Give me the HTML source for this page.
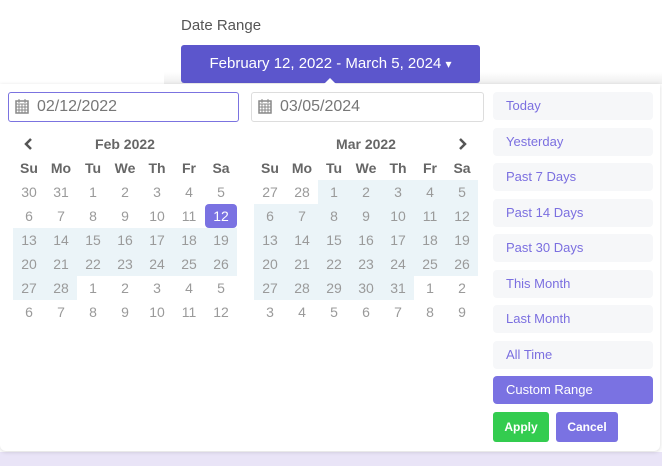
<!DOCTYPE html><html><head><style>
*{margin:0;padding:0;box-sizing:border-box}
body{width:662px;height:466px;position:relative;background:#fff;font-family:"Liberation Sans",sans-serif;overflow:hidden}
.a{position:absolute}
.t{position:absolute;font-size:14px;color:#9a9a9a;text-align:center;width:32px;line-height:24px}
.h{color:#666;font-weight:bold}
.hl{position:absolute;background:#ebf4f8}
.r{position:absolute;left:493px;width:160px;height:28px;background:#f6f7f9;border-radius:4px;color:#7b6fe0;font-size:13px;line-height:28px;padding-left:13px}
</style></head><body>
<div class="a" style="left:0;top:452px;width:662px;height:14px;background:#e9e4f7"></div>
<div class="a" style="left:164px;top:72px;width:498px;height:12px;background:linear-gradient(#fff,#eee)"></div>
<div class="a" style="left:181px;top:17px;font-size:15px;color:#555">Date Range</div>
<div class="a" style="left:181px;top:45px;width:299px;height:38px;background:#5c56cc;border-radius:3px;color:#fff;font-size:15px;line-height:38px;text-align:center">February 12, 2022 - March 5, 2024 <span style="font-size:12px">▾</span></div>
<div class="a" style="left:0;top:84px;width:660px;height:367px;background:#fff;border-radius:0 0 6px 6px;box-shadow:0 1px 4px rgba(0,0,0,.15)"></div>
<div class="a" style="left:324px;top:78px;width:0;height:0;border-left:6px solid transparent;border-right:6px solid transparent;border-bottom:6px solid #fff"></div>
<div class="a" style="left:8px;top:92px;width:231px;height:30px;border:1px solid #7b73e0;border-radius:3px;font-size:16px;color:#777;line-height:28px;padding-left:28px">02/12/2022</div>
<div class="a" style="left:251px;top:92px;width:233px;height:30px;border:1px solid #ddd;border-radius:3px;font-size:16px;color:#777;line-height:28px;padding-left:28px">03/05/2024</div>
<svg class="a" style="left:15px;top:99px" width="14" height="15"><rect x="1" y="2" width="12" height="12" fill="none" stroke="#888" stroke-width="1.5"/><path d="M1 5h12M1 8h12M1 11h12M4 5v9M7 5v9M10 5v9M4 0v4M10 0v4" stroke="#888" stroke-width="1"/></svg>
<svg class="a" style="left:258px;top:99px" width="14" height="15"><rect x="1" y="2" width="12" height="12" fill="none" stroke="#888" stroke-width="1.5"/><path d="M1 5h12M1 8h12M1 11h12M4 5v9M7 5v9M10 5v9M4 0v4M10 0v4" stroke="#888" stroke-width="1"/></svg>
<svg class="a" style="left:24px;top:137px" width="10" height="14"><path d="M7 2L2 7l5 5" stroke="#555" stroke-width="2.5" fill="none"/></svg>
<svg class="a" style="left:457px;top:137px" width="10" height="14"><path d="M3 2l5 5-5 5" stroke="#555" stroke-width="2.5" fill="none"/></svg>
<div class="a" style="left:13px;top:134px;width:224px;text-align:center;font-size:14px;font-weight:bold;color:#666;line-height:20px">Feb 2022</div>
<div class="a" style="left:254px;top:134px;width:224px;text-align:center;font-size:14px;font-weight:bold;color:#666;line-height:20px">Mar 2022</div>
<div class="hl" style="left:13px;top:228px;width:224px;height:48px"></div>
<div class="hl" style="left:13px;top:276px;width:64px;height:24px"></div>
<div class="hl" style="left:318px;top:180px;width:160px;height:24px"></div>
<div class="hl" style="left:254px;top:204px;width:224px;height:72px"></div>
<div class="hl" style="left:254px;top:276px;width:160px;height:24px"></div>
<div class="a" style="left:205px;top:204px;width:32px;height:24px;background:#7a72e2;border-radius:4px"></div>
<div id="c"></div>
<script>
var out='',d=['Su','Mo','Tu','We','Th','Fr','Sa'];
function cal(x0,rows){d.forEach(function(s,i){out+='<div class="t h" style="left:'+(x0+i*32)+'px;top:156px">'+s+'</div>'});
rows.forEach(function(r,j){r.forEach(function(n,i){var w=(x0==13&&j==1&&i==6)?';color:#fff':'';out+='<div class="t" style="left:'+(x0+i*32)+'px;top:'+(180+j*24)+'px'+w+'">'+n+'</div>'})})}
cal(13,[[30,31,1,2,3,4,5],[6,7,8,9,10,11,12],[13,14,15,16,17,18,19],[20,21,22,23,24,25,26],[27,28,1,2,3,4,5],[6,7,8,9,10,11,12]]);
cal(254,[[27,28,1,2,3,4,5],[6,7,8,9,10,11,12],[13,14,15,16,17,18,19],[20,21,22,23,24,25,26],[27,28,29,30,31,1,2],[3,4,5,6,7,8,9]]);
document.getElementById('c').innerHTML=out;
</script>
<div class="r" style="top:92px">Today</div>
<div class="r" style="top:128px">Yesterday</div>
<div class="r" style="top:163px">Past 7 Days</div>
<div class="r" style="top:199px">Past 14 Days</div>
<div class="r" style="top:234px">Past 30 Days</div>
<div class="r" style="top:270px">This Month</div>
<div class="r" style="top:305px">Last Month</div>
<div class="r" style="top:341px">All Time</div>
<div class="r" style="top:376px;background:#7a72e2;color:#fff">Custom Range</div>
<div class="a" style="left:493px;top:412px;width:56px;height:30px;background:#33cc4f;border-radius:3px;color:#fff;font-size:12px;font-weight:bold;line-height:30px;text-align:center">Apply</div>
<div class="a" style="left:556px;top:412px;width:62px;height:30px;background:#7a72e2;border-radius:3px;color:#fff;font-size:12px;font-weight:bold;line-height:30px;text-align:center">Cancel</div>
</body></html>
